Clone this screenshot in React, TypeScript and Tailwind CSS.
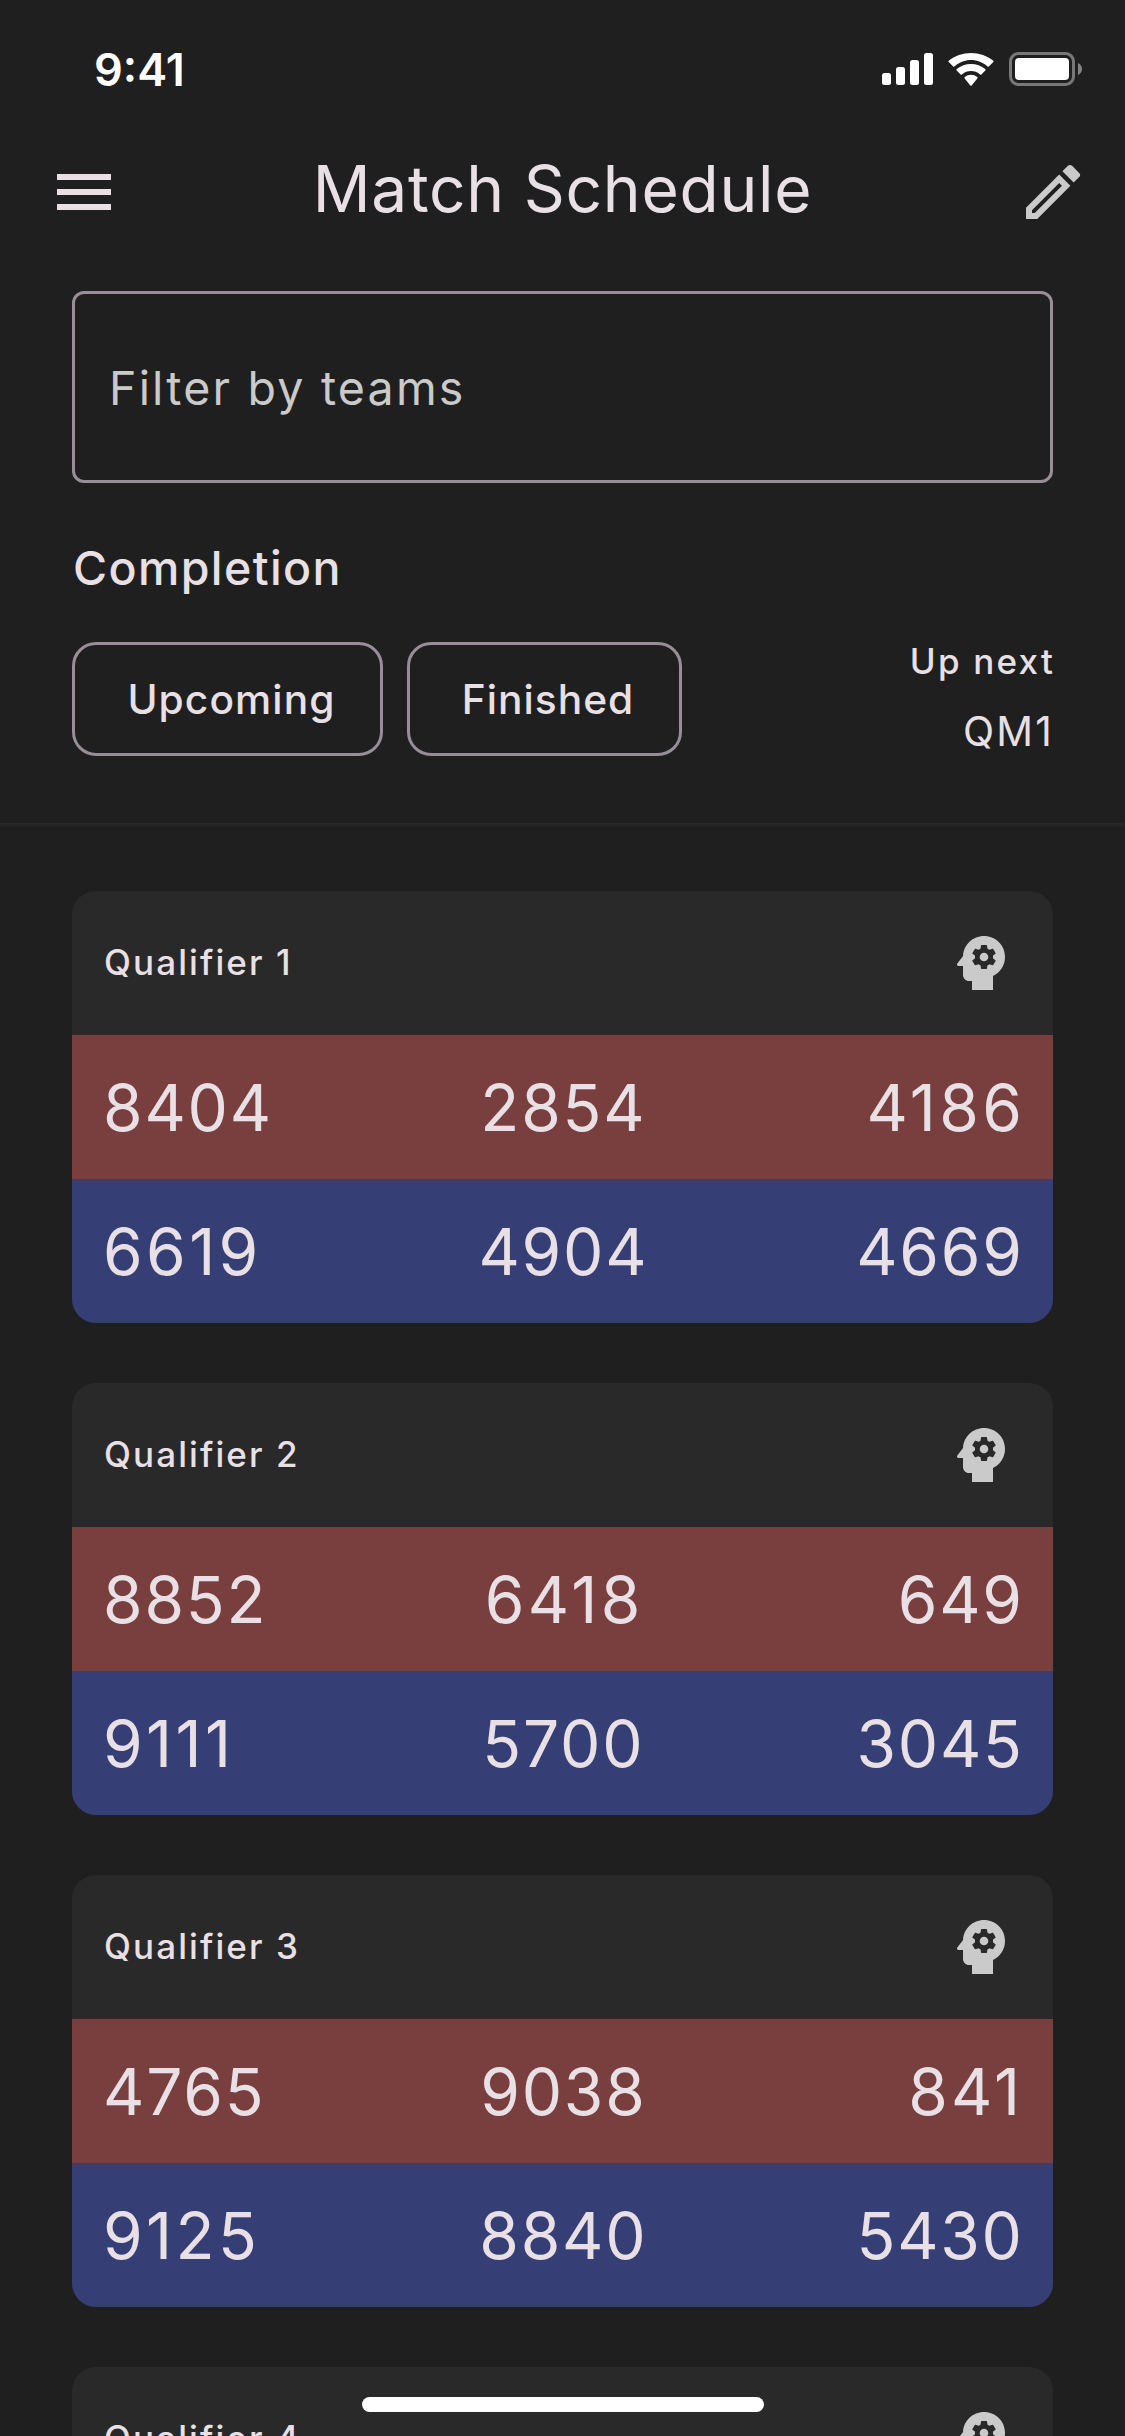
import { MdMenu, MdOutlineEdit, MdPsychology } from 'react-icons/md';

type Match = { name: string; red: string[]; blue: string[] };

const matches: Match[] = [
  { name: 'Qualifier 1', red: ['8404', '2854', '4186'], blue: ['6619', '4904', '4669'] },
  { name: 'Qualifier 2', red: ['8852', '6418', '649'], blue: ['9111', '5700', '3045'] },
  { name: 'Qualifier 3', red: ['4765', '9038', '841'], blue: ['9125', '8840', '5430'] },
  { name: 'Qualifier 4', red: [], blue: [] },
];

// The digit 1 is narrow, so numbers that contain it get wider tracking.
function tracking(team: string) {
  if (!team.includes('1')) return 'tracking-[1.8px] -mr-[1.8px]';
  if (team.endsWith('1') && team.length === 3) return 'tracking-[3px] -mr-px';
  return 'tracking-[3.4px] -mr-[3.4px]';
}

function SignalIcon() {
  return (
    <svg width="51" height="32" viewBox="0 0 51 32" fill="white">
      <rect x="0" y="20" width="9" height="12" rx="2.5" />
      <rect x="14" y="14" width="9" height="18" rx="2.5" />
      <rect x="28" y="7" width="9" height="25" rx="2.5" />
      <rect x="42" y="0" width="9" height="32" rx="2.5" />
    </svg>
  );
}

function WifiIcon() {
  return (
    <svg width="46" height="33" viewBox="0 0 46 33" fill="white">
      <path d="M23 7c6.200 0 12.100 2.400 16.600 6.600.4.3.9.3 1.200 0l4.500-4.500a.9.900 0 0 0 0-1.300C39.300 2.900 31.300 0 23 0S6.700 2.900.7 7.800a.9.900 0 0 0 0 1.300l4.500 4.500c.3.3.8.300 1.200 0C10.900 9.400 16.800 7 23 7z" />
      <path d="M23 18c3.400 0 6.600 1.200 9.100 3.400.4.3.9.3 1.300 0l3.900-3.900c.4-.4.4-1 0-1.400C33.400 12.800 28.400 11 23 11S12.600 12.800 8.700 16.100c-.4.4-.4 1 0 1.400l3.900 3.900c.4.3.9.3 1.300 0C16.400 19.200 19.600 18 23 18z" />
      <path d="M29.300 25.400c.4-.4.4-1 0-1.400a10.200 10.200 0 0 0-12.600 0c-.4.4-.4 1 0 1.400l5.600 7.100c.4.400 1 .400 1.400 0z" />
    </svg>
  );
}

function BatteryIcon() {
  return (
    <svg width="74" height="34" viewBox="0 0 74 34" fill="none">
      <rect x="1.500" y="1.500" width="63" height="31" rx="8" stroke="#787878" strokeWidth="3" />
      <rect x="6" y="6" width="54" height="22" rx="4" fill="white" />
      <path d="M69 11c2.500 1 4 3.400 4 6s-1.500 5-4 6z" fill="#848484" />
    </svg>
  );
}

function AllianceRow({ teams, color }: { teams: string[]; color: string }) {
  return (
    <div className={`grid h-36 grid-cols-3 items-center pl-[31px] pr-[31px] pt-px text-[64px] leading-none ${color}`}>
      {teams.map((team, i) => (
        <span
          key={team}
          className={`${tracking(team)} ${i === 0 ? 'justify-self-start' : i === 1 ? 'justify-self-center' : 'justify-self-end'}`}
        >
          {team}
        </span>
      ))}
    </div>
  );
}

function MatchCard({ match }: { match: Match }) {
  return (
    <article className="h-[432px] shrink-0 overflow-hidden rounded-3xl bg-[#292929]">
      <div className="flex h-36 items-center justify-between pl-8 pr-9">
        <h2 className="pb-0.5 text-[35px] font-medium leading-none tracking-[2.1px]">{match.name}</h2>
        <MdPsychology className="size-[72px] text-[#cacaca]" />
      </div>
      <AllianceRow teams={match.red} color="bg-[#793e3e]" />
      <AllianceRow teams={match.blue} color="bg-[#363f75]" />
    </article>
  );
}

function Chip({ label, className }: { label: string; className: string }) {
  return (
    <button
      className={`h-[114px] rounded-3xl border-3 border-[#988e97] pt-0.5 text-[40.7px] font-medium leading-none ${className}`}
    >
      {label}
    </button>
  );
}

export default function App() {
  return (
    <div className="relative flex h-[2436px] w-[1125px] flex-col overflow-hidden bg-[#1f1f1f] font-['Inter',sans-serif] text-[#e8e0e5]">
      <div className="flex h-[138px] shrink-0 items-center justify-between pl-[94px] pr-[42px]">
        <span className="text-[45px] font-semibold leading-none text-white">9:41</span>
        <div className="flex items-center">
          <SignalIcon />
          <span className="w-[15px]" />
          <WifiIcon />
          <span className="w-[15px]" />
          <BatteryIcon />
        </div>
      </div>

      <header className="flex h-27 shrink-0 items-center justify-between pl-12 pr-9">
        <MdMenu className="size-[72px]" />
        <h1 className="pb-[7px] pr-3 text-[64px] leading-none tracking-[0.75px]">Match Schedule</h1>
        <MdOutlineEdit className="size-[72px] text-[#cacaca]" />
      </header>

      <section className="flex shrink-0 flex-col px-[72px] pt-[45px]">
        <div className="flex h-48 items-center rounded-xl border-3 border-[#988e97] pl-[34px] pt-0.5 text-[46.5px] leading-none tracking-[2.2px] text-[#cacaca]">
          Filter by teams
        </div>
        <h2 className="mt-[55px] h-[61px] pl-px text-[46.5px] font-medium leading-[61px] tracking-[1.4px]">
          Completion
        </h2>
        <div className="mt-[43px] flex items-start">
          <Chip label="Upcoming" className="w-[311px] pl-2 tracking-[1.1px]" />
          <Chip label="Finished" className="ml-6 w-[275px] pl-[7px] tracking-[1px]" />
          <div className="ml-auto text-right">
            <p className="-mr-0.5 h-16 text-[35px] font-medium leading-[38px] tracking-[2.2px]">Up next</p>
            <p className="-mr-px h-[50px] text-[40.7px] leading-[52px] tracking-[2.2px]">QM1</p>
          </div>
        </div>
      </section>

      <div className="mt-[67px] h-[3px] shrink-0 bg-[#272727]" />

      <main className="flex flex-col gap-15 px-[72px] pt-[65px]">
        {matches.map((match) => (
          <MatchCard key={match.name} match={match} />
        ))}
      </main>

      <div className="absolute bottom-6 left-[362px] h-[15px] w-[402px] rounded-full bg-white" />
    </div>
  );
}
